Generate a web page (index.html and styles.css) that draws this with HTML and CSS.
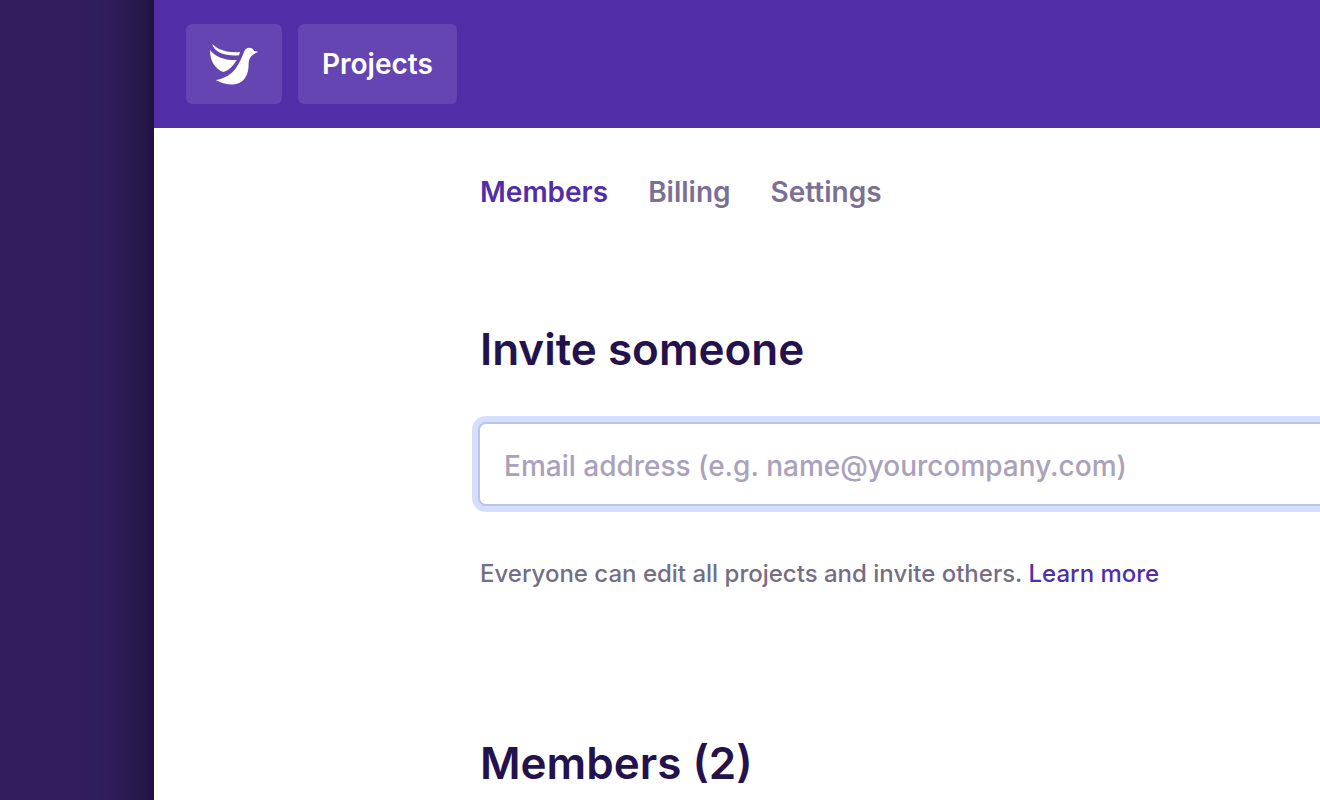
FILE: index.html
```html
<!DOCTYPE html>
<html lang="en">
<head>
<meta charset="utf-8">
<title>Members</title>
<link rel="stylesheet" href="styles.css">
</head>
<body>
<div class="app">
  <aside class="rail"></aside>
  <div class="window">
    <header class="topbar">
      <a class="tile logo" href="#" aria-label="Home">
        <svg viewBox="0 0 48 42" width="48" height="42" aria-hidden="true">
          <path fill="#fff" d="M2.3 1C8 7 18 10 30 9L29 12.3C17 13.5 4 10 2.3 1Z"/>
          <path fill="#fff" d="M0 7C5 14 15 17.5 26.7 17C23.5 22.5 19 27.5 13.3 29C5 26 0 18 0 7Z"/>
          <path fill="#fff" d="M5.7 37C14 36 22 31 26 25C30 19 32 14 34 9C35 6 37 4.8 39.3 4.8C41.8 4.8 43.3 6.5 44.2 8L48.4 8.8C45.5 10 43 11.5 41.5 13C38 17 39 20 38.5 24C38 34 32 41.2 23 41.5C16 41.5 10 39.5 5.7 37Z"/>
        </svg>
      </a>
      <a class="tile" href="#">Projects</a>
    </header>
    <main class="content">
      <nav class="tabs">
        <a class="tab active" href="#">Members</a>
        <a class="tab" href="#">Billing</a>
        <a class="tab" href="#">Settings</a>
      </nav>
      <section class="invite">
        <h2><label for="email">Invite someone</label></h2>
        <input class="field" id="email" type="email" placeholder="Email address (e.g. name@yourcompany.com)">
        <p class="hint">Everyone can edit all projects and invite others. <a href="#">Learn more</a></p>
      </section>
      <section class="members">
        <h2>Members (2)</h2>
      </section>
    </main>
  </div>
</div>
</body>
</html>
```
FILE: styles.css
```css
* { box-sizing: border-box; }
body {
  margin: 0;
  font-family: Inter, "Liberation Sans", sans-serif;
  font-weight: 500;
}
a { text-decoration: none; }
.app { display: flex; height: 100vh; overflow: hidden; }
.rail {
  flex: 0 0 154px;
  background: linear-gradient(90deg, #331d5f 0, #331d5f 64px, #2f1e5e 72px, #321c5c 86px, #2d1f5c 94px, #301c59 108px, #2b1c56 118px, #261849 142px, #231443 151px, #1c1036 154px);
}
.window { flex: 1; min-width: 0; background: #fff; }
.topbar { display: flex; gap: 16px; padding: 24px 32px; background: #512da8; }
.tile {
  display: flex;
  align-items: center;
  height: 80px;
  padding: 0 24px;
  border-radius: 6px;
  background: #6545b1;
  color: #fff;
  font-size: 28px;
  font-weight: 600;
}
.content { padding: 44px 0 0 324px; }
.tabs { display: flex; gap: 40px; padding-left: 2px; font-size: 28px; line-height: 40px; font-weight: 600; }
.tab { color: #7b6f96; }
.tab.active { color: #512da8; }
h2 { margin: 0; padding-left: 2px; font-size: 44px; line-height: 54px; font-weight: 600; color: #24124d; }
.invite { padding-top: 110px; }
.field {
  display: block;
  width: 100%;
  height: 84px;
  margin-top: 46px;
  padding: 4px 24px 0;
  border: 2px solid #bac5e8;
  border-right: 0;
  border-radius: 8px 0 0 8px;
  outline: 0;
  box-shadow: 0 0 0 6px #d5dffd;
  font: inherit;
  font-size: 28px;
}
.field::placeholder { color: #aaa1bb; opacity: 1; }
.hint { margin: 52px 0 0; padding-left: 2px; font-size: 24px; line-height: 32px; color: #746e85; }
.hint a { color: #512da8; }
.members { padding-top: 146px; }
```
